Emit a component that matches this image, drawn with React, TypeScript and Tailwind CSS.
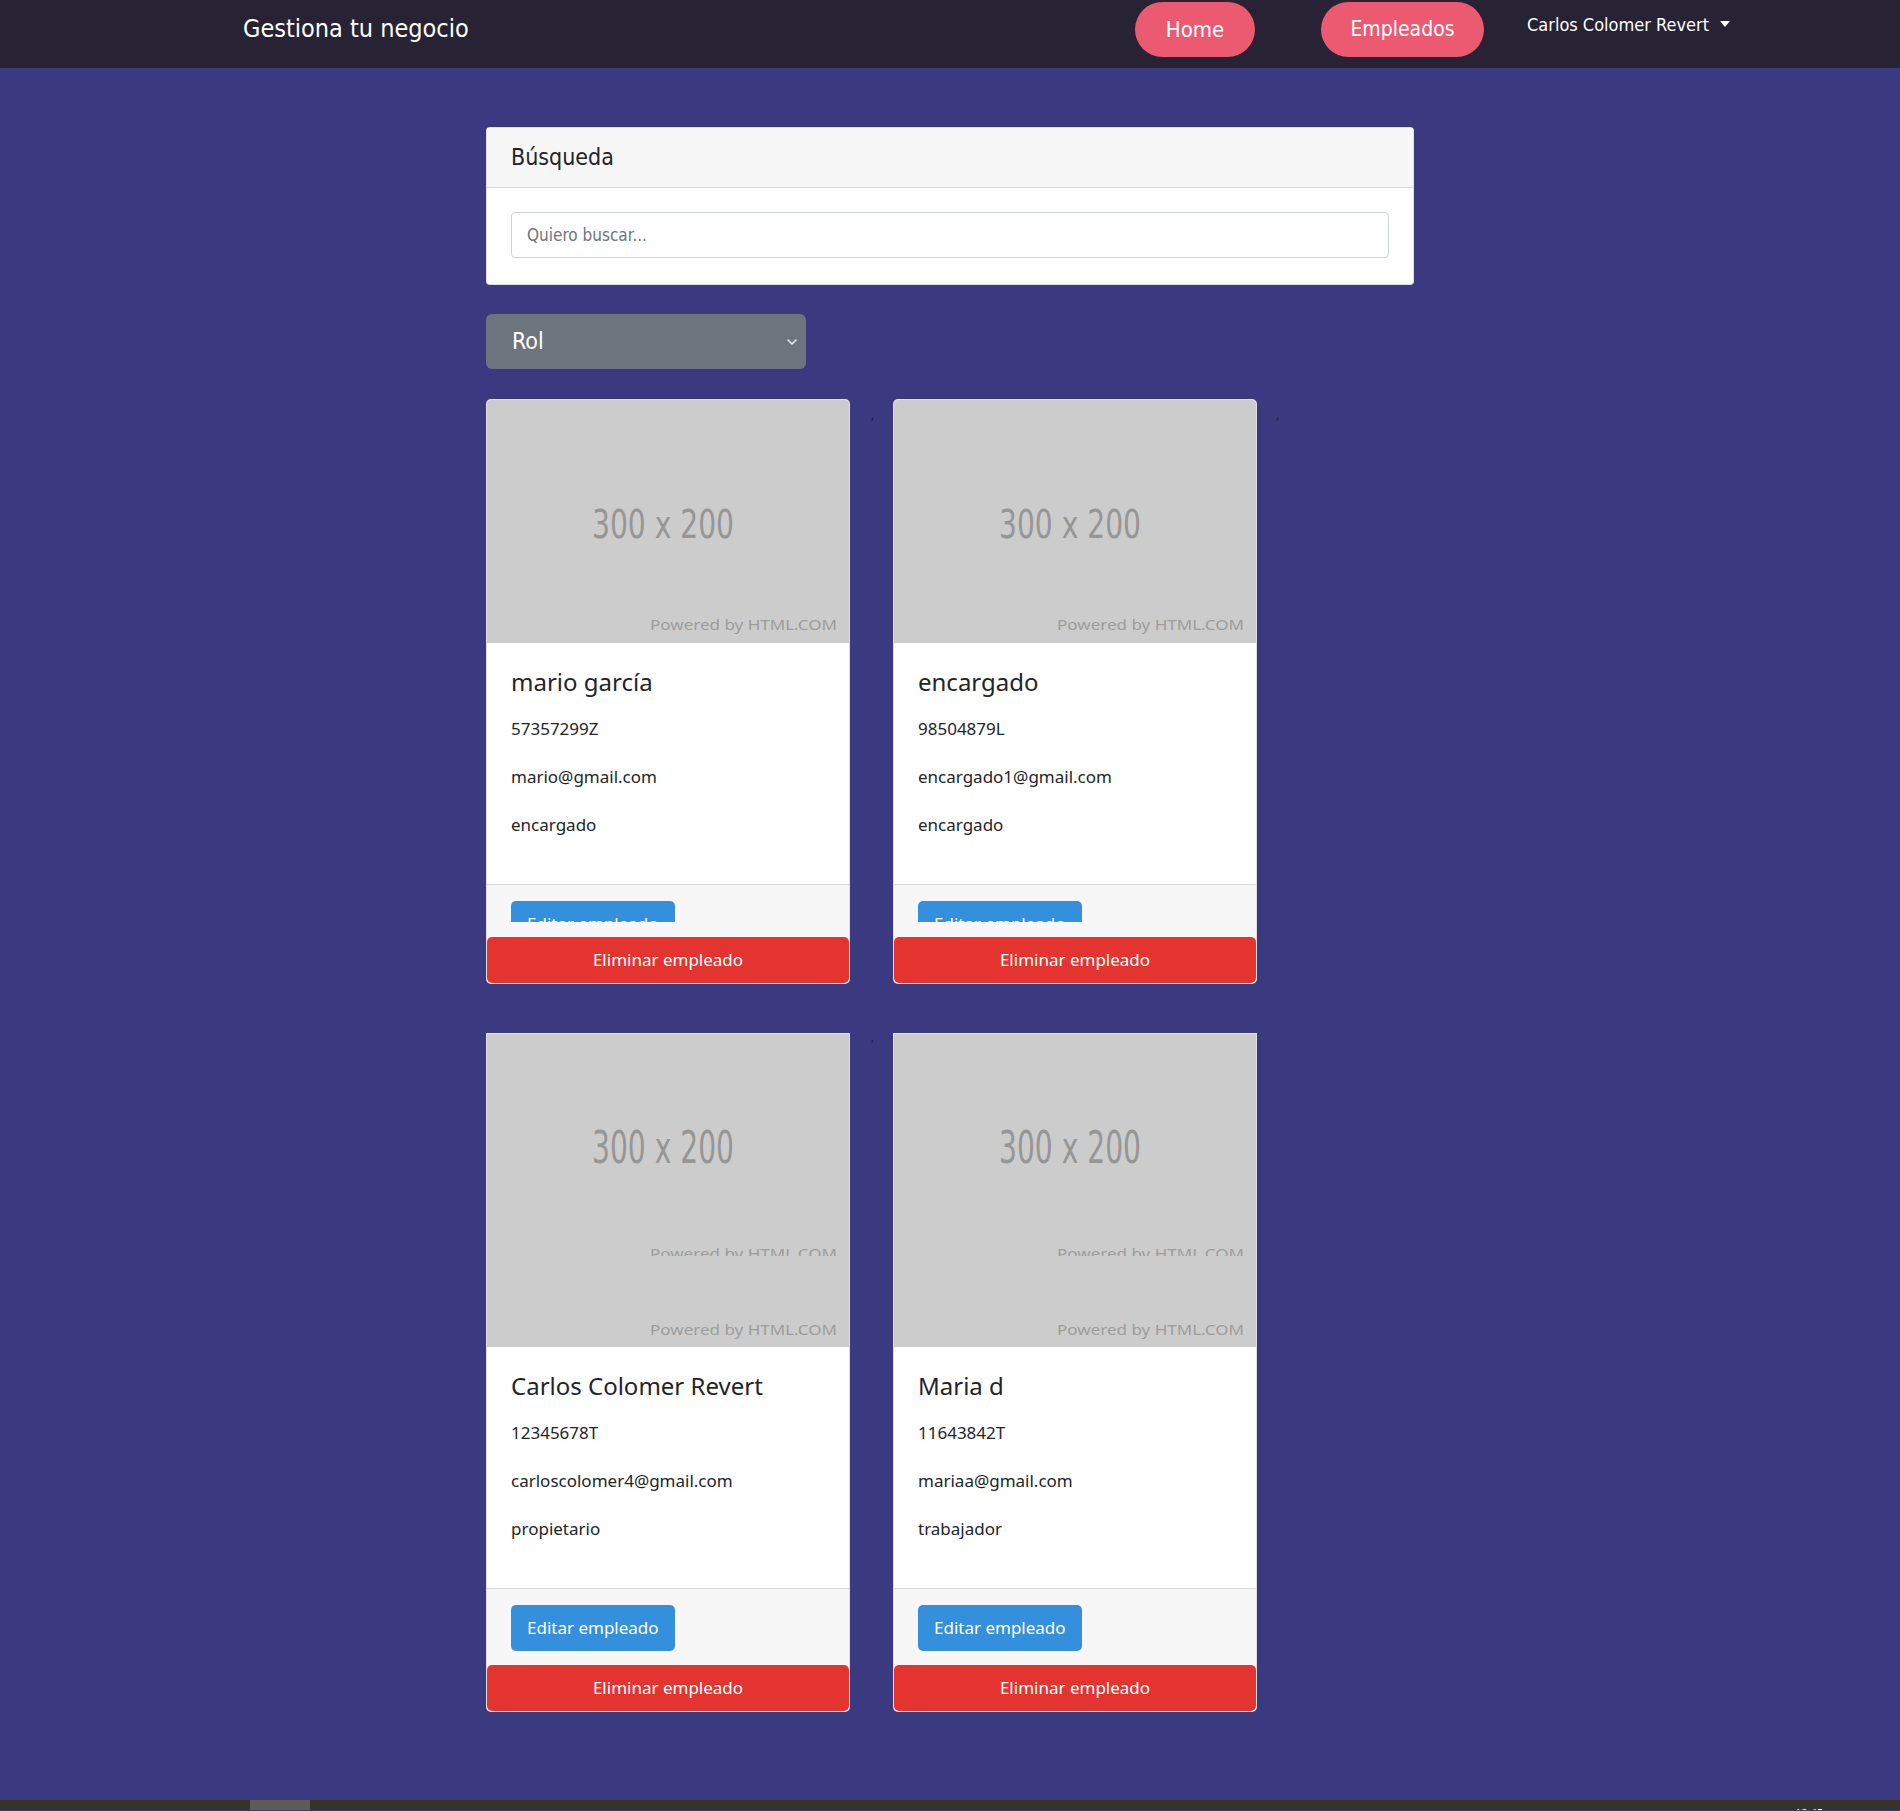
import React from "react";

const cond = "font-['DejaVu_Sans_Condensed','DejaVu_Sans',sans-serif] [font-stretch:condensed]";
const sans = "font-['Noto_Sans','Open_Sans',sans-serif]";

type Employee = {
  name: string;
  dni: string;
  email: string;
  role: string;
};

const rowOne: Employee[] = [
  { name: "mario garcía", dni: "57357299Z", email: "mario@gmail.com", role: "encargado" },
  { name: "encargado", dni: "98504879L", email: "encargado1@gmail.com", role: "encargado" },
];

const rowTwo: Employee[] = [
  { name: "Carlos Colomer Revert", dni: "12345678T", email: "carloscolomer4@gmail.com", role: "propietario" },
  { name: "Maria d", dni: "11643842T", email: "mariaa@gmail.com", role: "trabajador" },
];

const narrow = "'Liberation Sans Narrow','DejaVu Sans Condensed',sans-serif";
const powered = "'Noto Sans','Open Sans',sans-serif";

// placeholder picture (300x200 from html.com); second row renders stretched
function Placeholder({ tall }: { tall?: boolean }) {
  if (!tall) {
    return (
      <svg viewBox="0 0 362 243" className="block h-[243px] w-full">
        <rect width="362" height="243" fill="#cccccc" />
        <text x="105" y="138" fontSize="39" fill="#969696" fontFamily={narrow} textLength="142" lengthAdjust="spacingAndGlyphs">
          300 x 200
        </text>
        <text x="163" y="230" fontSize="15" fill="#9d9d9d" fontFamily={powered} textLength="187" lengthAdjust="spacingAndGlyphs">
          Powered by HTML.COM
        </text>
      </svg>
    );
  }
  return (
    <svg viewBox="0 0 362 313" className="block h-[313px] w-full">
      <defs>
        <clipPath id="cut">
          <rect x="0" y="0" width="362" height="222" />
        </clipPath>
      </defs>
      <rect width="362" height="313" fill="#cccccc" />
      <text x="0" y="0" fontSize="39" fill="#969696" fontFamily={narrow} textLength="142" lengthAdjust="spacingAndGlyphs" transform="translate(105 129) scale(1 1.15)">
        300 x 200
      </text>
      <text x="163" y="225" fontSize="15" fill="#9d9d9d" fontFamily={powered} textLength="187" lengthAdjust="spacingAndGlyphs" clipPath="url(#cut)">
        Powered by HTML.COM
      </text>
      <text x="163" y="301" fontSize="15" fill="#9d9d9d" fontFamily={powered} textLength="187" lengthAdjust="spacingAndGlyphs">
        Powered by HTML.COM
      </text>
    </svg>
  );
}

function EmployeeCard({ emp, tall }: { emp: Employee; tall?: boolean }) {
  return (
    <div className={`w-[364px] shrink-0 overflow-hidden border border-black/[.125] bg-white ${sans} text-[#212529] ${tall ? "rounded-b-[5px]" : "rounded-[5px]"}`}>
      <Placeholder tall={tall} />
      <div className="px-6 pt-6 pb-[25px]">
        <h5 className="mb-[19px] text-[24px] leading-[29px]">{emp.name}</h5>
        <p className="mb-[21px] text-[17px] leading-[27px]">{emp.dni}</p>
        <p className="mb-[21px] text-[17px] leading-[27px]">{emp.email}</p>
        <p className="mb-[21px] text-[17px] leading-[27px]">{emp.role}</p>
      </div>
      <div className="border-t border-black/[.125] bg-[#f7f7f7]">
        <div className={`overflow-hidden px-6 pt-4 ${tall ? "" : "h-[37px]"}`}>
          <button className="flex h-[46px] items-center rounded-[5px] bg-[#3490dc] px-4 text-[17px] text-white">
            Editar empleado
          </button>
        </div>
        <button className={`flex h-[46px] w-full items-center justify-center rounded-[5px] bg-[#e3342f] text-[17px] text-white ${tall ? "mt-[14px]" : "mt-[15px]"}`}>
          Eliminar empleado
        </button>
      </div>
    </div>
  );
}

function Comma({ className }: { className: string }) {
  return <span className={`block w-[43px] shrink-0 pl-[21px] text-[12px] leading-none text-[#1b1b3a] ${className}`}>,</span>;
}

export default function App() {
  return (
    <div className="min-h-[1811px] w-full bg-[#3b3a80]">
      <nav className="flex h-[68px] items-start bg-[#272334] pl-[243px] text-white">
        <a className={`${cond} mt-[11px] text-[25px] leading-[36px]`}>Gestiona tu negocio</a>
        <div className={`${cond} mr-[170px] ml-auto flex items-start pt-[2px]`}>
          <a className="flex h-[55px] w-[120px] items-center justify-center rounded-full bg-[#eb5a71] text-[22px] font-light">
            Home
          </a>
          <a className="ml-[66px] flex h-[55px] w-[163px] items-center justify-center rounded-full bg-[#eb5a71] text-[21px] font-light">
            Empleados
          </a>
          <div className="mt-[10px] ml-[43px] flex w-[203px] items-center justify-between text-[18px] leading-[26px]">
            <span>Carlos Colomer Revert</span>
            <span className="mb-[2px] h-0 w-0 border-x-[5px] border-t-[6px] border-x-transparent border-t-white" />
          </div>
        </div>
      </nav>

      <main className="mx-auto flex w-[928px] flex-col pt-[59px] pb-[88px]">
        <div className="rounded-[4px] border border-black/[.125] bg-white">
          <div className={`${cond} flex h-[60px] items-center border-b border-black/[.125] bg-[#f7f7f7] px-6 text-[23px] text-[#212529]`}>
            Búsqueda
          </div>
          <div className="px-6 pt-6 pb-[26px]">
            <input
              placeholder="Quiero buscar..."
              className={`${cond} h-[46px] w-full rounded-[4px] border border-[#ced4da] px-[15px] text-[17px] text-[#495057] placeholder:text-[#6c757d] outline-none`}
            />
          </div>
        </div>

        <div className={`${cond} mt-[29px] flex h-[55px] w-[320px] items-center justify-between rounded-[6px] bg-[#6c757d] pr-[8px] pl-[26px] text-[23px] text-white`}>
          <span>Rol</span>
          <svg width="12" height="8" viewBox="0 0 12 8" fill="none">
            <path d="M2 2l4 4 4-4" stroke="#e9ecef" strokeWidth="1.6" strokeLinecap="round" strokeLinejoin="round" />
          </svg>
        </div>

        <div className="mt-[30px] flex items-start">
          <EmployeeCard emp={rowOne[0]} />
          <Comma className="mt-[10px]" />
          <EmployeeCard emp={rowOne[1]} />
          <Comma className="mt-[10px] -ml-[2px]" />
        </div>

        <div className="mt-[49px] flex items-start">
          <EmployeeCard emp={rowTwo[0]} tall />
          <Comma className="-mt-[2px]" />
          <EmployeeCard emp={rowTwo[1]} tall />
        </div>
      </main>

      <div className="flex h-[10px] overflow-hidden bg-[#38322a]">
        <div className="ml-[250px] h-full w-[60px] bg-[#5f5a55]" />
        <span className="mr-[77px] ml-auto pt-[7px] font-['Noto_Sans',sans-serif] text-[11px] leading-none text-white">12:45</span>
      </div>
    </div>
  );
}
